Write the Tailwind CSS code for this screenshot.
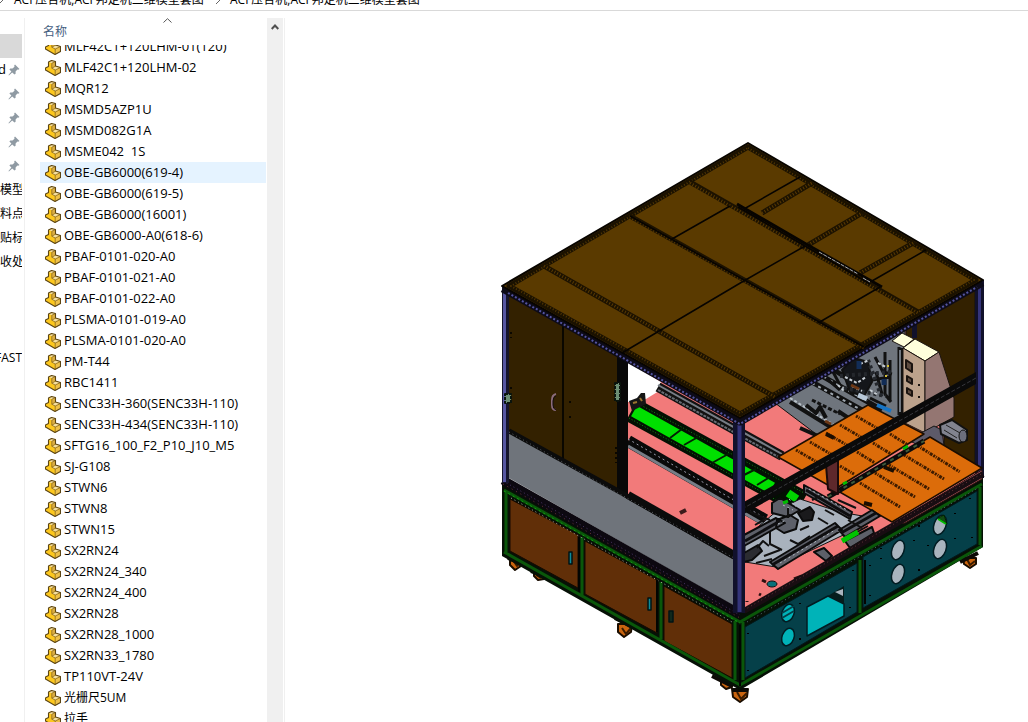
<!DOCTYPE html>
<html lang="zh-CN">
<head>
    <meta charset="UTF-8">
    <meta name="viewport" content="width=device-width, initial-scale=1.0">
    <title>ACF压合机,ACF邦定机三维模型套图</title>
    <script src="https://cdn.jsdelivr.net/npm/@tailwindcss/browser@4"></script>
</head>
<body class="h-screen overflow-hidden flex flex-col bg-white text-black text-[12px] font-['Open_Sans','Noto_Sans_CJK_SC',sans-serif]">
    <!-- Shared icons -->
    <svg class="hidden">
        <symbol id="part" viewBox="0 0 16 16">
            <path d="M3.500 2 6.500.5 10.500 1.500V6L15.500 7.500V12.500L10 15.500.5 10V8L3.500 6.500z" fill="#fdc81e"/>
            <path d="M6.800 3.300 10.500 2V6L6.800 8z" fill="#dcae42"/>
            <path d="M3.500 2 6.500.5 10.500 1.500 6.800 3.200zM7 8.300 10.500 6.300 15.500 7.600 10.200 10z" fill="#f6e0a0"/>
            <path d="M10.300 10.200 15.300 8V12.500L10.300 15.200z" fill="#eec14a"/>
            <path d="M6.800 3.200V8.200L10.200 10V15.200M6.800 3.200 10.300 1.700M10.200 10 15.200 7.700M6.800 8.200 10.500 6.200" fill="none" stroke="#8a6a20" stroke-width=".8"/>
            <path d="M3.500 2 6.500.5 10.500 1.500V6L15.500 7.500V12.500L10 15.500.5 10V8L3.500 6.500z" fill="none" stroke="#5c4513" stroke-width="1.100" stroke-linejoin="round"/>
        </symbol>
        <symbol id="pin" viewBox="0 0 12 12">
            <path d="M7 .5 11.500 5 10.200 5.800 9.400 5.600 7.600 7.500 7.600 9.700 6.500 10.600 4.200 8.500.9 11.500.5 11.100 3.400 7.600 1.400 5.600 2.300 4.500 4.500 4.500 6.500 2.700 6.200 1.500z" fill="#8f9aa3"/>
        </symbol>
    </svg>

    <!-- Address bar -->
    <header class="h-[11px] shrink-0 overflow-hidden border-b border-[#d9d9d9]">
        <nav class="flex items-center h-4 -mt-2 whitespace-nowrap">
            <svg class="w-[14px] h-4 shrink-0" viewBox="0 0 14 16" fill="none" stroke="#666"><path d="M-1 4 3 8-1 12"/></svg>
            <a href="#" class="w-[192px]">ACF压合机,ACF邦定机三维模型套图</a>
            <svg class="w-6 h-4 shrink-0" viewBox="0 0 24 16" fill="none" stroke="#666"><path d="M10 4 14 8 10 12"/></svg>
            <a href="#">ACF压合机,ACF邦定机三维模型套图</a>
        </nav>
    </header>

    <main class="flex flex-1 min-h-0 pt-[7px]">
        <!-- Quick access -->
        <aside class="w-[25px] shrink-0 border-r border-[#f0f0f0] pt-4 pr-0.5">
            <ul id="quickAccess"></ul>
        </aside>

        <!-- File list -->
        <section class="w-[242px] shrink-0 flex flex-col overflow-hidden">
            <button class="relative h-[27px] shrink-0 pl-[18px] text-left text-[#45607f]">
                名称
                <svg class="absolute left-[138px] top-0 w-[9px] h-[5px]" viewBox="0 0 9 5" fill="none" stroke="#555"><path d="M.5 4.500 4.500.7l4 3.800"/></svg>
            </button>
            <div class="flex-1 min-h-0 overflow-hidden">
                <ul id="fileList" class="-mt-[9px]"></ul>
            </div>
        </section>

        <!-- Scrollbar -->
        <div class="w-4 shrink-0 bg-[#f0f0f0] pt-1.5 flex justify-center items-start">
            <svg class="w-2 h-[6px]" viewBox="0 0 8 6" fill="none" stroke="#505050" stroke-width="2"><path d="M.7 5 4 1.500 7.300 5"/></svg>
        </div>

        <!-- Preview -->
        <section class="flex-1 min-w-0 ml-px border-l border-[#f0f0f0]">
            <svg class="w-full h-full" viewBox="285 18 743 704" preserveAspectRatio="xMinYMin meet" stroke-linejoin="round" role="img" aria-label="ACF">
                <!-- casters -->
                <g fill="#c9640f" stroke="#1a0d00" stroke-width="2">
                    <path d="M510 557h12l-1 9-6 4-5-5zM534 572h12l-2 7-6 1-4-4zM618 624h14l-1 8-7 5-6-5zM721 681h12l-1 6-6 2-5-4zM732 689h16l-1 8-7 5-7-5zM963 558h13v6l-6 4-6-4z"/>
                    <path d="M513 560l4 6 4-5M536 575l5 3M622 628l4 6 5-6M737 692l4 7 6-6M967 559l3 6 5-4" fill="none" stroke="#3b1c00"/>
                </g>
                <path d="M508 558l16 6M531 571l16 5M615 618l18 9M712 676l20 10M732 690h16M960 562l18-9" stroke="#0d0a06" stroke-width="4"/>
                <!-- base frame -->
                <path d="M502 482 740 612 983 476V547L740 690 502 556z" fill="#061006"/>
                <path d="M510 499 578 535V588L510 551zM585 541 657 580V633L585 594zM664 586 732 624V678L664 641z" fill="#612f08" stroke="#160900"/>
                <path d="M745 627 857 563V612L745 678zM863 557 977 491V544L863 608z" fill="#054049" stroke="#02181c"/>
                <g fill="none" stroke="#0a570a" stroke-width="3">
                    <path d="M504 490 740 622 982 484M504 552 740 685 982 546M506 492V552M582 537V595M661 582V639M735 621V680M743 622V680M860 560V613M980 487V545"/>
                </g>
                <path d="M504 491 740 623" fill="none" stroke="#10a010" stroke-dasharray="2 3"/>
                <path d="M511 498 732 622" fill="none" stroke="#b0a8a0" stroke-dasharray="1 3"/>
                <path d="M747 622 978 488" fill="none" stroke="#567" stroke-dasharray="1 3"/>
                <path d="M579 537V592M657 580V632M740 625V686M865 560V604" stroke="#020502" stroke-width="2"/>
                <g fill="#0d8b99" stroke="#001414" stroke-width="1.500">
                    <path d="M569 552h3v12h-3zM648 598h3v12h-3z"/><path d="M669 611h4v11h-4z" fill="#10281c"/>
                </g>
                <g fill="#a9b4be" stroke="#021c22" stroke-width="1.500">
                    <ellipse cx="898" cy="550" rx="6" ry="10" transform="rotate(20 898 550)"/>
                    <ellipse cx="898" cy="574" rx="6" ry="10" transform="rotate(20 898 574)"/>
                    <ellipse cx="940" cy="549" rx="6" ry="10" transform="rotate(20 940 549)"/>
                    <ellipse cx="940" cy="525" rx="6" ry="10" transform="rotate(20 940 525)"/>
                    <g fill="#00b3b8">
                        <ellipse cx="788" cy="613" rx="6" ry="9" transform="rotate(20 788 613)"/>
                        <ellipse cx="788" cy="637" rx="6" ry="9" transform="rotate(20 788 637)"/>
                        <path d="M807 607 828 596 844 604V616L807 636z"/>
                    </g>
                </g>
                <path d="M828 596 844 586V604z" fill="#061c1c"/><path d="M835 592l8-3v7z" fill="#a9b4be"/>
                <path d="M782 613 794 606M782 618 794 611" stroke="#054049" stroke-width="2"/>
                <path d="M938 518 944 515 947 524z" fill="#134a12" stroke="#020"/><path d="M938 519 946 524" stroke="#0b0" stroke-width="2"/>
                <path d="M748 633v1M748 670v1M800 603v1M800 638v2M850 607v1M853 570v1M870 565v1M919 525v2M919 569v2M970 498v1M972 537v1M881 548v1M881 558v1M914 540v1M928 545v1M955 538v1M955 513v1M870 595v1" stroke="#000" stroke-width="2"/>

                <!-- interior floor -->
                <path d="M628 365H740L860 350 975 300V476L740 611 628 494z" fill="#f27a7a"/>
                <path d="M628 362 661 382 659 391 646 399 628 402z" fill="#fff"/>
                <!-- back wall and dark side panel -->
                <path d="M775 403 905 328V440L867 407 820 437z" fill="#6f757d" stroke="#111"/>
                <path d="M906 327 975 284V470L944 452 944 380 906 350z" fill="#332100" stroke="#111"/>

                <!-- rails across the floor -->
                <g fill="none">
                    <path d="M658 387 782 456" stroke="#111" stroke-width="10"/>
                    <path d="M658 385 782 454" stroke="#777d86" stroke-width="2"/>
                    <path d="M658 390 782 459" stroke="#666b73" stroke-width="2" stroke-dasharray="3 1"/>
                    <path d="M628 441 765 520" stroke="#0a0a0a" stroke-width="12"/>
                    <path d="M628 439 765 518" stroke="#99a" stroke-width="1" stroke-dasharray="2 3"/>
                    <path d="M628 446 765 525" stroke="#777d86" stroke-width="3"/>
                    <path d="M632 410 802 503" stroke="#031003" stroke-width="25"/>
                    <path d="M633 401 806 494M629 418 796 511" stroke="#178217" stroke-width="1" stroke-dasharray="1 2"/>
                    <path d="M634 411 772 488" stroke="#00e000" stroke-width="12"/>
                    <path d="M788 493 797 499" stroke="#00d400" stroke-width="8"/>
                    <path d="M670 438 682 429M684 445 698 437M712 463 730 453M742 476 756 469M757 485 770 477" stroke="#032003" stroke-width="2"/>
                </g>
                <path d="M629 401 637 398 641 393 645 393 646 404 632 411z" fill="#161616"/>
                <path d="M633 403l4-1M640 398l2 3" stroke="#99752e" stroke-width="2"/>
                <path d="M680 513l6-3" stroke="#3c1b1b" stroke-width="4"/>

                <!-- rear mechanisms -->
                <g fill="none" stroke="#111" stroke-width="2">
                    <path d="M790 402 850 439" stroke-width="4"/><path d="M790 398 842 430" stroke="#b7c0c8" stroke-dasharray="3 2"/>
                    <path d="M812 400 840 414" stroke-width="3" stroke-dasharray="4 2"/>
                    <path d="M812 382 878 419M822 376 882 410M834 370 850 380" stroke-width="5"/>
                    <path d="M812 383 876 418M824 377 867 401" stroke="#a0a8b0" stroke-dasharray="3 4"/>
                    <path d="M842 370 854 358 868 362 872 382 864 396 850 392z" fill="#14161a"/>
                    <path d="M832 370l8 15M826 378l14 12M875 357l8 15 9 2M872 380l18-3M885 352v42l6 8M890 360v40M876 372l6 22M870 398l16 8" stroke-width="3"/>
                    <path d="M840 376 892 372M868 360 882 398M844 388 886 396" stroke="#24272c" stroke-width="4" stroke-dasharray="3 3"/>
                    <path d="M845 377l12 6 9-6M852 386l10 5M860 364l9-4M838 385l7 7M870 390l8 5M878 363l8 4" stroke="#c6cdd3" stroke-dasharray="3 2"/>
                    <path d="M899 347V415M902 348V420" stroke-width="3"/><path d="M900 350V412" stroke="#71777f"/>
                    <path d="M806 405l10 8 4-6 6 11M838 411l12 8M800 428l18 8" stroke-width="4"/>
                    <path d="M859 361v8M884 379v6" stroke="#122d57" stroke-width="5"/>
                    <path d="M877 405 891 411" stroke="#1774c4" stroke-width="4"/><path d="M851 385l8 4M825 421l6 3" stroke="#6c3715" stroke-width="3"/>
                    <path d="M888 365v2M886 375v2" stroke="#d5bf35"/>
                    <path d="M858 395l9 4" stroke="#b8c8d8" stroke-width="5"/>
                </g>

                <!-- control cabinet -->
                <g stroke="#1b1410">
                    <path d="M892 341 902 333 914 339 904 347z" fill="#ffffdc"/>
                    <path d="M903 348 915 339 939 352 925 361z" fill="#ffffdc"/>
                    <path d="M903 348 925 361V433L903 422z" fill="#bca28c"/>
                    <path d="M925 361 939 352 949 383 954 398V417L925 433z" fill="#947672"/>
                    <path d="M906 360l6 4v8l-6-4zM907 376l5 3v5l-5-3zM907 388l5 3v5l-5-3z" fill="#5d4b40" stroke-width="2"/>
                    <path d="M919 384v2M919 396v2" stroke-width="2"/>
                </g>
                <path d="M908 440 934 426 942 430 944 446 936 442 922 447z" fill="#5d5a69" stroke="#151515"/>
                <path d="M940 425 952 420 967 430 967 440 959 443 941 434z" fill="#81838f" stroke="#111" stroke-width="2"/>
                <ellipse cx="963" cy="436" rx="4" ry="6" fill="#6c6e7c" stroke="#111"/>
                <path d="M946 425 960 433M944 430 957 438" stroke="#222"/>

                <!-- right post -->
                <path d="M975 280h9V478h-9z" fill="#11112b"/><path d="M979.500 282V478" stroke="#34347a" stroke-width="3"/>

                <!-- orange plates -->
                <path d="M868 405 924 434 835 489 778 457z" fill="#dc6c0a" stroke="#1b0d00" stroke-width="1.500"/>
                <path d="M930 437 982 468 892 522 838 491z" fill="#dc6c0a" stroke="#1b0d00" stroke-width="1.500"/>
                <path d="M892 524 982 470V479L905 523z" fill="#c86a6d" stroke="#301010"/>
                <g fill="none" stroke="#3f1c00" stroke-width="3" stroke-dasharray="2 1 1 1 3 1">
                    <path d="M856 416l26 15M840 425l26 15M826 433l26 15M810 442l26 15M796 450l26 15M890 434l18 11M873 443l18 11M857 452l18 11M840 466l14 8"/>
                    <path d="M918 446l42 26M904 455l40 24M889 465l40 24M875 473l40 24M860 483l40 24"/>
                </g>
                <path d="M864 503l8 2M826 434l8 4M884 467l10 4" stroke="#1b0d00" stroke-width="4"/>
                <path d="M828 497 924 441" stroke="#0b0b0b" stroke-width="5"/><path d="M828 497 924 441" stroke="#3c5b3c" stroke-dasharray="4 5" stroke-width="2"/>
                <path d="M903 449l5-3M843 484l4-2" stroke="#0b0" stroke-width="3"/>

                <!-- front stage -->
                <path d="M745 538 778 510 800 499 840 512 868 517 858 528 776 567 745 562z" fill="#a9b2bd" stroke="#111"/>
                <g fill="#5d6069" stroke="#0b0b0b" stroke-width="2">
                    <path d="M744 535 776 518 785 523 744 546zM770 562 835 523 842 530 778 569zM804 485 852 512 850 519 804 493zM839 530 872 510 880 516 845 537zM772 503 780 498 800 510 788 517 772 513zM777 520 790 515 798 520 796 529 784 533 776 528zM814 552 824 548 832 556 826 561zM845 541 872 527 874 533 850 548z"/>
                    <path d="M798 513 810 507 814 512 812 520 803 521z" fill="#1a1a1c"/>
                    <path d="M744 553 758 545 762 551 752 560 744 562z" fill="#2b2c31"/>
                </g>
                <path d="M772 565 838 526M841 533 876 513M745 541 780 521M806 490 850 516" fill="none" stroke="#0e0e10" stroke-width="3"/>
                <path d="M809 489 847 510M780 563 835 530M789 499 796 507M783 505l10 5M778 524l8-4" stroke="#b4bcc4" stroke-dasharray="2 3"/>
                <path d="M757 548l6-7 6 5M764 556l16-6M770 532v12l12 6M790 540l8 4 12-8M818 518l10 6M756 563l16-4M800 530l9-4M825 510l9 5M750 512l20 8M755 525l12-7M848 520l14 8M812 500l8-4M838 500l18 8M850 536l18-10M788 508v10" fill="none" stroke="#111" stroke-width="2"/>
                <path d="M826 465 838 459V494L828 489z" fill="#5e282b" stroke="#1b0a0a" stroke-width="2"/>
                <path d="M842 541 858 532" stroke="#00c400" stroke-width="5"/>
                <path d="M783 503l5-2" stroke="#0b0" stroke-width="3"/>
                <ellipse cx="772" cy="584" rx="5" ry="3" fill="#087079" stroke="#111"/>
                <path d="M762 580l4 2M759 594l2 1M794 579l8-3M747 601v1" stroke="#2b1010" stroke-width="3"/>
                <path d="M744 611 983 474" stroke="#180d12" stroke-width="6"/><path d="M744 610 983 473" stroke="#6b3439" stroke-dasharray="1 3"/>

                <!-- crossbeam -->
                <path d="M742 503 976 372V384L742 515z" fill="#0a0a0a"/>
                <path d="M742 509 976 378" stroke="#37373c" stroke-dasharray="4 2"/>

                <!-- left doors and kick panel -->
                <path d="M508 288 620 350V493L508 430z" fill="#332100" stroke="#0a0700" stroke-width="2"/>
                <path d="M563 322V459" stroke="#0a0700" stroke-width="2"/>
                <path d="M617 350H628V497L617 492z" fill="#080808"/>
                <path d="M509 432 620 492 734 557V606L509 478z" fill="#6f747b"/>
                <path d="M509 431 620 492 734 557" fill="none" stroke="#0b0b0b" stroke-width="5"/>
                <path d="M628 495 734 555" stroke="#0b0b0b" stroke-width="8"/>
                <path d="M509 432 734 558" stroke="#5d6166" stroke-dasharray="1 3"/>
                <path d="M503 480 740 614" stroke="#0c0810" stroke-width="9"/>
                <path d="M503 481 740 615" stroke="#4b3568" stroke-dasharray="1 3"/><path d="M503 484 740 618" stroke="#673434" stroke-dasharray="1 4"/>
                <path d="M556 394q-4 1-4 6v5q0 5 4 5" fill="none" stroke="#8b6c7c" stroke-width="2"/>
                <path d="M556 396q-3 1-3 5v4q0 4 3 5" fill="none" stroke="#120c10"/>
                <path d="M570 401v2M570 416v2M511 387v2M511 332v6M616 447v16" stroke="#0a0700" stroke-width="2" stroke-dasharray="2 3"/>
                <path d="M615 383h5v18h-5z" fill="#6c8f74" stroke="#0a140d" stroke-width="2" stroke-dasharray="3 1"/>

                <!-- left and front posts -->
                <path d="M502 286h7V483h-7z" fill="#15152d"/><path d="M504.500 288V482" stroke="#5757a3" stroke-width="3"/>
                <path d="M505 394h6v9h-6z" fill="#6c8f74" stroke="#0a140d" stroke-width="2" stroke-dasharray="3 1"/>
                <path d="M733 416h12V613h-12z" fill="#11112b"/><path d="M739.500 420V612" stroke="#34347a" stroke-width="4"/>
                <path d="M912 318h5v20h-5z" fill="#11112b"/>

                <!-- roof -->
                <path d="M503 288 740 421 982 282" fill="none" stroke="#0d0b18" stroke-width="9"/>
                <path d="M508 293 740 424 977 287" fill="none" stroke="#5454a0" stroke-width="2" stroke-dasharray="2 2"/>
                <path d="M748 143 983 280 740 418 502 286z" fill="#5a3a00" stroke="#080500" stroke-width="2"/>
                <path d="M748 147 976 280 740 414 509 286z" fill="none" stroke="#1a1100" stroke-width="5"/>
                <path d="M748 148 974 280 740 413 511 286z" fill="none" stroke="#523602" stroke-width="2" stroke-dasharray="1 2"/>
                <path d="M544 266 775 397M630 216 864 347M690 182 918 312M762 213 812 183M808 245 862 213M860 273 915 242" fill="none" stroke="#1c1200" stroke-width="5"/>
                <path d="M544 266 775 397M630 217 864 348M690 183 918 313M762 213 812 183M808 245 862 213M860 273 915 242" fill="none" stroke="#5a3a00" stroke-width="3" stroke-dasharray="1 2"/>
                <path d="M630 216 864 347M738 207 870 284M622 353 742 282 805 246M672 239 730 206M744 209 800 177M872 281 926 250M818 323 880 287" fill="none" stroke="#070400" stroke-width="1.500"/>
                <path d="M737 204 806 244 882 287" fill="none" stroke="#070400" stroke-width="3"/>
                <path d="M819 252 858 274M863 278 870 282" stroke="#a9adb5" stroke-width="1" stroke-dasharray="4 1"/>
            </svg>
        </section>
    </main>

    <script>
        const quickAccess = ['', 'd', 'pin', 'pin', 'pin', 'pin', '三维模型', '下料点', '转贴标', '回收处', '', '', '', 'FAST'];
        const files = [
            'MLF42C1+120LHM-01(120)', 'MLF42C1+120LHM-02', 'MQR12', 'MSMD5AZP1U', 'MSMD082G1A', 'MSME042  1S',
            'OBE-GB6000(619-4)', 'OBE-GB6000(619-5)', 'OBE-GB6000(16001)', 'OBE-GB6000-A0(618-6)',
            'PBAF-0101-020-A0', 'PBAF-0101-021-A0', 'PBAF-0101-022-A0', 'PLSMA-0101-019-A0', 'PLSMA-0101-020-A0',
            'PM-T44', 'RBC1411', 'SENC33H-360(SENC33H-110)', 'SENC33H-434(SENC33H-110)', 'SFTG16_100_F2_P10_J10_M5',
            'SJ-G108', 'STWN6', 'STWN8', 'STWN15', 'SX2RN24', 'SX2RN24_340', 'SX2RN24_400', 'SX2RN28',
            'SX2RN28_1000', 'SX2RN33_1780', 'TP110VT-24V', '光栅尺5UM', '拉手'
        ];
        const pin = '<svg class="w-3 h-3 shrink-0 mr-0.5"><use href="#pin"/></svg>';
        const isChinese = (text) => /[\u4e00-\u9fff]/.test(text);

        function quickLabel(item) {
            if (item === 'pin') return pin;
            if (item === 'd') return '<span class="mr-0.5 text-[13px]">d</span>' + pin;
            return `<span class="${isChinese(item) ? '-mr-0.5' : ''}">${item}</span>`;
        }

        document.getElementById('quickAccess').innerHTML = quickAccess.map((item, i) => `
            <li class="h-6 flex items-center justify-end overflow-hidden whitespace-nowrap ${i === 0 ? 'bg-[#d9d9d9]' : ''}">
                ${quickLabel(item)}
            </li>`).join('');

        document.getElementById('fileList').innerHTML = files.map((name, i) => `
            <li class="h-[21px] ml-[15px] mr-px pl-[5px] flex items-center gap-[3px] ${i === 6 ? 'bg-[#e5f3ff]' : ''}">
                <svg class="w-4 h-4 shrink-0"><use href="#part"/></svg>
                <span class="whitespace-pre ${isChinese(name) ? 'text-[12px]' : 'text-[13px]'}">${name}</span>
            </li>`).join('');
    </script>
</body>
</html>
